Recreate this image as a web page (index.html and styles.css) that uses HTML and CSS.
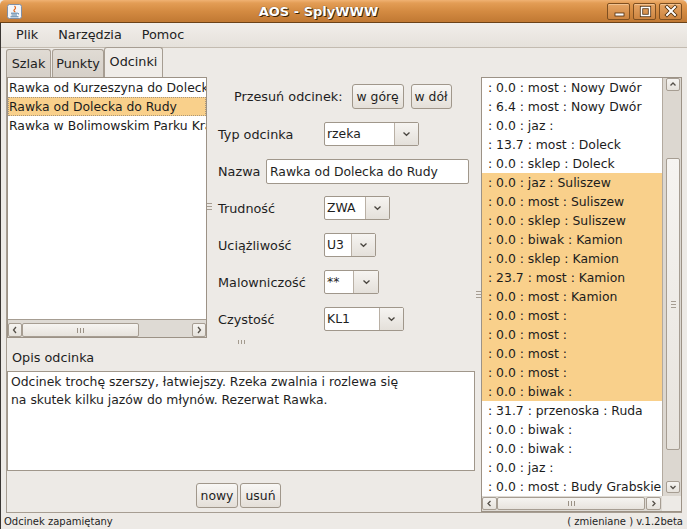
FILE: index.html
```html
<!DOCTYPE html>
<html lang="pl">
<head>
<meta charset="utf-8">
<title>AOS - SplyWWW</title>
<link rel="stylesheet" href="styles.css">
</head>
<body>
<div class="window">
  <div class="titlebar">
    <svg class="appicon" width="15" height="15" viewBox="0 0 15 15">
      <rect x="0.5" y="0.5" width="14" height="14" rx="2" fill="#f3f5f9" stroke="#7f8ea5"/>
      <path d="M7.5 2 q2 2 0 3.5 q-1.5 1.2 0.8 2.5" fill="none" stroke="#e2661b" stroke-width="1.2"/>
      <path d="M4 9.2 h6.5 q1.5 0 1 1.2 M4.5 11 h5.5 M3.5 12.8 h8" fill="none" stroke="#4f7ca3" stroke-width="1"/>
    </svg>
    <div class="title">AOS - SplyWWW</div>
    <div class="wbtns">
      <div class="wbtn">
        <svg width="21" height="15" viewBox="0 0 21 15"><rect x="7" y="9" width="9" height="3" fill="#fff" stroke="#4a2a0a" stroke-width="0.8"/></svg>
      </div>
      <div class="wbtn">
        <svg width="21" height="15" viewBox="0 0 21 15"><rect x="7.5" y="3.5" width="8" height="8" fill="none" stroke="#4a2a0a" stroke-width="3.2"/><rect x="7.5" y="3.5" width="8" height="8" fill="none" stroke="#fff" stroke-width="1.6"/></svg>
      </div>
      <div class="wbtn">
        <svg width="21" height="15" viewBox="0 0 21 15"><path d="M7 3 L15 11 M15 3 L7 11" stroke="#4a2a0a" stroke-width="3.6" stroke-linecap="square"/><path d="M7 3 L15 11 M15 3 L7 11" stroke="#fff" stroke-width="2" stroke-linecap="square"/></svg>
      </div>
    </div>
  </div>
  <div class="frame">
    <div class="menubar">
      <span class="menu">Plik</span>
      <span class="menu">Narzędzia</span>
      <span class="menu">Pomoc</span>
    </div>
    <div class="tabs">
      <div class="tab t1">Szlak</div>
      <div class="tab t2">Punkty</div>
      <div class="tab t3 sel">Odcinki</div>
    </div>
    <div class="panel">
      <div class="leftpart">
        <div class="toppart">
          <div class="listbox">
            <div class="rows">
              <div class="row">Rawka od Kurzeszyna do Dolecka</div>
              <div class="row selrow">Rawka od Dolecka do Rudy</div>
              <div class="row">Rawka w Bolimowskim Parku Krajobrazowym</div>
            </div>
            <div class="hscroll lh">
              <div class="sbtn w14"><svg width="12" height="12" viewBox="0 0 12 12"><path d="M7 3 L4.5 6 L7 9" fill="none" stroke="#555049" stroke-width="1.3"/></svg></div>
              <div class="sthumb lthumb"><span class="grip-v3"></span></div>
              <div class="sfill"></div>
              <div class="sbtn w14"><svg width="12" height="12" viewBox="0 0 12 12"><path d="M5 3 L7.5 6 L5 9" fill="none" stroke="#555049" stroke-width="1.3"/></svg></div>
            </div>
          </div>
          <div class="vsplit"><span class="grip-h3"></span></div>
          <div class="form">
            <div class="moverow">
              <span class="movelabel">Przesuń odcinek:</span>
              <div class="btn b-gore">w górę</div>
              <div class="btn b-dol">w dół</div>
            </div>
            <div class="frow">
              <span class="flabel">Typ odcinka</span>
              <div class="combo c-typ"><span class="ctext">rzeka</span><span class="carrow"><svg width="9" height="6" viewBox="0 0 9 6"><path d="M1.5 1.5 L4.5 4.3 L7.5 1.5" fill="none" stroke="#4a4640" stroke-width="1.3"/></svg></span></div>
            </div>
            <div class="frow nrow">
              <span class="nlabel">Nazwa</span>
              <div class="field">Rawka od Dolecka do Rudy</div>
            </div>
            <div class="frow r12">
              <span class="flabel">Trudność</span>
              <div class="combo c-tr"><span class="ctext">ZWA</span><span class="carrow"><svg width="9" height="6" viewBox="0 0 9 6"><path d="M1.5 1.5 L4.5 4.3 L7.5 1.5" fill="none" stroke="#4a4640" stroke-width="1.3"/></svg></span></div>
            </div>
            <div class="frow">
              <span class="flabel">Uciążliwość</span>
              <div class="combo c-uc"><span class="ctext">U3</span><span class="carrow"><svg width="9" height="6" viewBox="0 0 9 6"><path d="M1.5 1.5 L4.5 4.3 L7.5 1.5" fill="none" stroke="#4a4640" stroke-width="1.3"/></svg></span></div>
            </div>
            <div class="frow">
              <span class="flabel">Malowniczość</span>
              <div class="combo c-ma"><span class="ctext">**</span><span class="carrow"><svg width="9" height="6" viewBox="0 0 9 6"><path d="M1.5 1.5 L4.5 4.3 L7.5 1.5" fill="none" stroke="#4a4640" stroke-width="1.3"/></svg></span></div>
            </div>
            <div class="frow">
              <span class="flabel">Czystość</span>
              <div class="combo c-cz"><span class="ctext">KL1</span><span class="carrow"><svg width="9" height="6" viewBox="0 0 9 6"><path d="M1.5 1.5 L4.5 4.3 L7.5 1.5" fill="none" stroke="#4a4640" stroke-width="1.3"/></svg></span></div>
            </div>
          </div>
        </div>
        <div class="hsplit"><span class="grip-v3 dark"></span></div>
        <div class="bottompart">
          <div class="opis">Opis odcinka</div>
          <div class="textarea">Odcinek trochę szerszy, łatwiejszy. Rzeka zwalnia i rozlewa się<br>na skutek kilku jazów do młynów. Rezerwat Rawka.</div>
          <div class="btnrow">
            <div class="btn b-nowy">nowy</div>
            <div class="btn b-usun">usuń</div>
          </div>
        </div>
      </div>
      <div class="vsplit2"><span class="grip-h3"></span></div>
      <div class="rightpart">
        <div class="rmain">
          <div class="rrows">
            <div class="row r">: 0.0 : most : Nowy Dwór</div>
            <div class="row r">: 6.4 : most : Nowy Dwór</div>
            <div class="row r">: 0.0 : jaz :</div>
            <div class="row r">: 13.7 : most : Doleck</div>
            <div class="row r">: 0.0 : sklep : Doleck</div>
            <div class="row r hl">: 0.0 : jaz : Suliszew</div>
            <div class="row r hl">: 0.0 : most : Suliszew</div>
            <div class="row r hl">: 0.0 : sklep : Suliszew</div>
            <div class="row r hl">: 0.0 : biwak : Kamion</div>
            <div class="row r hl">: 0.0 : sklep : Kamion</div>
            <div class="row r hl">: 23.7 : most : Kamion</div>
            <div class="row r hl">: 0.0 : most : Kamion</div>
            <div class="row r hl">: 0.0 : most :</div>
            <div class="row r hl">: 0.0 : most :</div>
            <div class="row r hl">: 0.0 : most :</div>
            <div class="row r hl">: 0.0 : most :</div>
            <div class="row r hl">: 0.0 : biwak :</div>
            <div class="row r">: 31.7 : przenoska : Ruda</div>
            <div class="row r">: 0.0 : biwak :</div>
            <div class="row r">: 0.0 : biwak :</div>
            <div class="row r">: 0.0 : jaz :</div>
            <div class="row r">: 0.0 : most : Budy Grabskie</div>
          </div>
          <div class="vscroll">
            <div class="sbtn vb-up"><svg width="12" height="11" viewBox="0 0 12 11"><path d="M3.5 6.5 L6 4 L8.5 6.5" fill="none" stroke="#555049" stroke-width="1.3"/></svg></div>
            <div class="vtrack1"></div>
            <div class="sthumb vthumb"><span class="grip-h3"></span></div>
            <div class="vtrack2"></div>
            <div class="sbtn vb-dn"><svg width="12" height="11" viewBox="0 0 12 11"><path d="M3.5 4 L6 6.5 L8.5 4" fill="none" stroke="#555049" stroke-width="1.3"/></svg></div>
          </div>
        </div>
        <div class="rbottom">
          <div class="hscroll rh">
            <div class="sbtn w15"><svg width="13" height="11" viewBox="0 0 13 11"><path d="M7.5 3 L5 5.5 L7.5 8" fill="none" stroke="#555049" stroke-width="1.3"/></svg></div>
            <div class="sthumb rthumb"><span class="grip-v3"></span></div>
            <div class="sfill"></div>
            <div class="sbtn w15"><svg width="13" height="11" viewBox="0 0 13 11"><path d="M5.5 3 L8 5.5 L5.5 8" fill="none" stroke="#555049" stroke-width="1.3"/></svg></div>
          </div>
          <div class="corner"></div>
        </div>
      </div>
    </div>
    <div class="statusbar">
      <span>Odcinek zapamiętany</span>
      <span>( zmieniane ) v.1.2beta</span>
    </div>
  </div>
</div>
</body>
</html>
```

FILE: styles.css
```css
* { box-sizing: border-box; }
html, body { margin: 0; padding: 0; }
body {
  width: 687px;
  height: 529px;
  overflow: hidden;
  background: #edeae6;
  font-family: "DejaVu Sans", "Liberation Sans", sans-serif;
  font-size: 12.8px;
  color: #1e1e1e;
}
.window { width: 687px; height: 529px; display: flex; flex-direction: column; }

/* title bar */
.titlebar {
  height: 23px;
  flex: none;
  display: flex;
  align-items: center;
  padding: 0 5px 0 7px;
  background: linear-gradient(#f0b273 0px, #e39d55 3px, #d48b42 11px, #c27a34 21px);
  border-bottom: 1px solid #6b4217;
  border-radius: 5px 5px 0 0;
}
.appicon { flex: none; display: block; }
.title {
  flex: 1;
  text-align: center;
  padding-left: 8px;
  color: #fff;
  font-weight: bold;
  font-size: 13px;
  text-shadow: 1px 1px 0 #3e2306, 0 0 1px #4a2a0a;
}
.wbtns { display: flex; gap: 3px; }
.wbtn {
  width: 23px;
  height: 17px;
  border: 1px solid #7e4f20;
  border-radius: 2px;
  background: linear-gradient(#e6a565, #cd8540);
  box-shadow: inset 0 1px 0 rgba(255, 230, 200, 0.45);
}
.wbtn svg { display: block; }

/* frame */
.frame {
  flex: 1;
  display: flex;
  flex-direction: column;
  border-left: 1px solid #3a3633;
}
.menubar {
  height: 25px;
  flex: none;
  display: flex;
  align-items: center;
  padding-left: 5px;
  background: linear-gradient(#f1eeea, #e5e1db);
  border-bottom: 1px solid #c3bbb0;
  font-size: 12.8px;
}
.menu { padding: 0 10px; line-height: 24px; color: #222; }

.tabs {
  height: 29px;
  flex: none;
  display: flex;
  align-items: flex-end;
  padding-left: 5px;
  font-size: 12.8px;
}
.tab {
  height: 28px;
  border: 1px solid #a69d92;
  border-bottom: none;
  border-radius: 3px 3px 0 0;
  background: linear-gradient(#e0dbd4, #d6d0c8);
  display: flex;
  align-items: center;
  justify-content: center;
  color: #222;
}
.t1 { width: 45px; margin-right: 1px; }
.t2 { width: 52px; }
.t3 { width: 59px; }
.tab.sel {
  height: 30px;
  margin-top: -1px;
  background: #efece8;
  padding-bottom: 3px;
  position: relative;
}

/* panel */
.panel {
  margin-left: 5px;
  width: 676px;
  height: 436px;
  flex: none;
  border-left: 1px solid #a69d92;
  border-bottom: 1px solid #a69d92;
  display: flex;
}
.leftpart { width: 468px; display: flex; flex-direction: column; }
.toppart { height: 261px; display: flex; }

.listbox {
  width: 200px;
  height: 261px;
  border: 1px solid #9c9286;
  background: #fff;
  display: flex;
  flex-direction: column;
}
.rows { height: 241px; overflow: hidden; }
.row {
  height: 19px;
  line-height: 19px;
  padding-left: 1px;
  white-space: nowrap;
  overflow: hidden;
  font-size: 12.4px;
  color: #1c1c1c;
}
.selrow { background: #f9d08b; outline: 1px dotted #a8977c; outline-offset: -1px; }

/* scrollbars */
.hscroll { display: flex; background: #dedad4; }
.lh { height: 18px; border-top: 1px solid #a69d92; padding-top: 3px; }
.sbtn {
  border: 1px solid #a69d92;
  background: linear-gradient(#f6f4f1, #e6e2dc);
  border-radius: 2px;
  display: flex;
  align-items: center;
  justify-content: center;
}
.sbtn svg { display: block; }
.w14 { width: 14px; height: 14px; }
.w15 { width: 15px; height: 13px; }
.sthumb {
  border: 1px solid #a69d92;
  background: linear-gradient(#f6f4f1, #e7e3dd);
  border-radius: 2px;
  display: flex;
  align-items: center;
  justify-content: center;
}
.lthumb { width: 117px; height: 14px; }
.sfill { flex: 1; }

.grip-v3 {
  display: block;
  width: 7px;
  height: 5px;
  background: repeating-linear-gradient(90deg, #9a9185 0 1px, transparent 1px 3px);
}
.grip-v3.dark { height: 4px; background: repeating-linear-gradient(90deg, #a39a8e 0 1px, transparent 1px 3px); }
.grip-h3 {
  display: block;
  width: 5px;
  height: 7px;
  background: repeating-linear-gradient(#a69d92 0 1px, transparent 1px 3px);
}

.vsplit {
  width: 4px;
  display: flex;
  align-items: center;
  justify-content: flex-end;
  padding-bottom: 2px;
}
.vsplit .grip-h3 { margin-right: -1px; }

/* form */
.form {
  width: 264px;
  padding: 7px 0 0 7px;
  display: flex;
  flex-direction: column;
}
.moverow { height: 25px; display: flex; align-items: center; padding-left: 16px; }
.movelabel { margin-right: 9px; }
.btn {
  height: 25px;
  border: 1px solid #a0978b;
  border-radius: 3px;
  background: linear-gradient(#f8f7f5, #e4dfd8);
  display: flex;
  align-items: center;
  justify-content: center;
  font-size: 12.4px;
  color: #1e1e1e;
}
.b-gore { width: 52px; margin-right: 7px; }
.b-dol { width: 41px; }

.frow { height: 24px; margin-top: 13px; display: flex; align-items: center; }
.frow.nrow { height: 25px; }
.frow.r12 { margin-top: 12px; }
.flabel { width: 106px; flex: none; }
.nlabel { width: 48px; flex: none; }
.combo {
  height: 24px;
  display: flex;
  border: 1px solid #a0978b;
  border-radius: 2px;
  background: #fff;
}
.ctext {
  flex: 1;
  padding-left: 2px;
  line-height: 22px;
  font-size: 12.4px;
}
.carrow {
  width: 24px;
  border-left: 1px solid #b9b0a5;
  background: linear-gradient(#f6f4f1, #e4e0da);
  display: flex;
  align-items: center;
  justify-content: center;
}
.carrow svg { display: block; }
.c-typ { width: 95px; }
.c-tr { width: 66px; }
.c-uc { width: 52px; }
.c-ma { width: 55px; }
.c-ma .carrow { width: 25px; }
.c-cz { width: 80px; }
.field {
  width: 203px;
  height: 25px;
  border: 1px solid #a0978b;
  border-radius: 2px;
  background: #fff;
  padding-left: 3px;
  line-height: 23px;
  font-size: 12.4px;
  white-space: nowrap;
}

.hsplit {
  height: 7px;
  display: flex;
  justify-content: center;
  padding-top: 2px;
}

.bottompart { flex: 1; padding-top: 4px; display: flex; flex-direction: column; }
.opis { height: 18px; line-height: 18px; padding-left: 5px; }
.textarea {
  margin-top: 4px;
  height: 100px;
  border: 1px solid #a0978b;
  background: #fff;
  padding: 1px 3px;
  font-size: 12.4px;
  line-height: 18.4px;
  white-space: nowrap;
}
.btnrow { margin-top: 12px; display: flex; justify-content: center; gap: 2px; padding-right: 5px; }
.b-nowy { width: 42px; }
.b-usun { width: 41px; }

.vsplit2 {
  width: 6px;
  display: flex;
  align-items: center;
  padding-left: 1px;
}

/* right list */
.rightpart {
  width: 201px;
  height: 435px;
  border: 1px solid #9c9286;
  display: flex;
  flex-direction: column;
}
.rmain { height: 418px; display: flex; }
.rrows { width: 180px; background: #fff; overflow: hidden; }
.row.r { padding-left: 6px; }
.row.hl { background: #f9d08b; }
.vscroll {
  width: 19px;
  border-left: 1px solid #b3aa9f;
  background: #dcd7d0;
  padding: 0 1px 0 3px;
  display: flex;
  flex-direction: column;
}
.vb-up { height: 13px; }
.vtrack1 { height: 67px; }
.vthumb { height: 292px; }
.vtrack2 { height: 31px; }
.vb-dn { height: 12px; }
.rbottom { height: 15px; display: flex; }
.rh { width: 180px; height: 15px; padding: 1px 1px 0 0; }
.rthumb { width: 148px; height: 13px; }
.corner { width: 19px; background: #edeae6; }

/* status bar */
.statusbar {
  height: 16px;
  flex: none;
  display: flex;
  justify-content: space-between;
  align-items: center;
  padding: 0 4px 0 3px;
  font-size: 10px;
  color: #1e1e1e;
}
```
